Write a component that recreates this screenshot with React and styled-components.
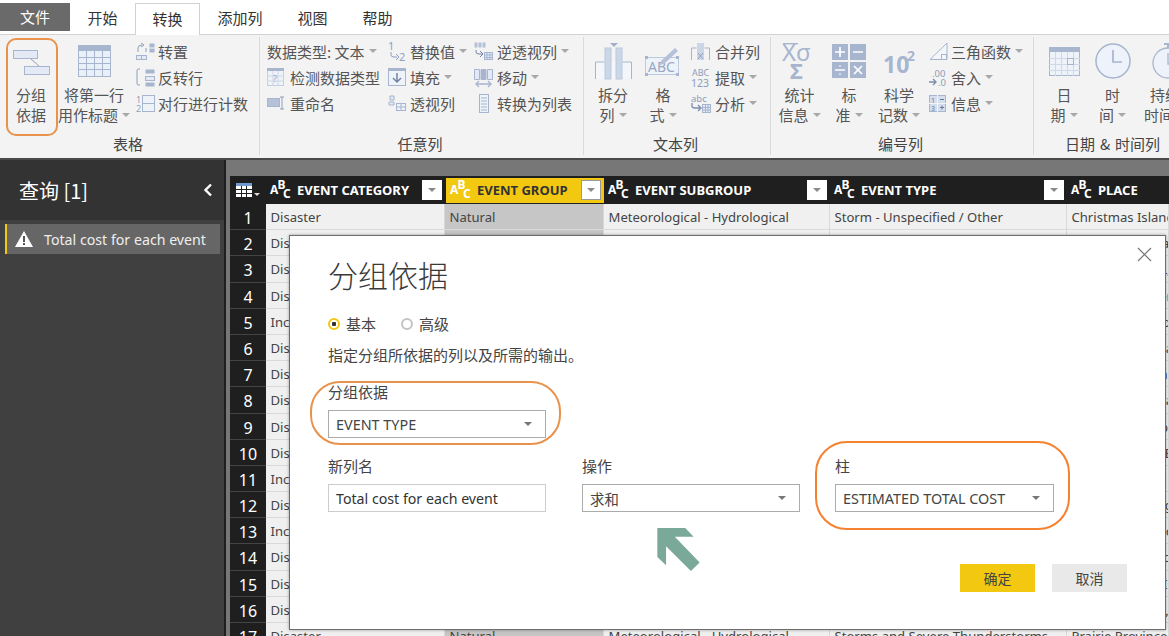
import React from 'react'
import styled, { createGlobalStyle } from 'styled-components'

const CJK = `"Noto Sans CJK SC", "Noto Sans", sans-serif`
const LATIN = `"Noto Sans", "Noto Sans CJK SC", sans-serif`
const LINE = '#a7b5cf'
const FILL = '#e3eaf5'

const Global = createGlobalStyle`
html, body { margin: 0; padding: 0; height: 636px; overflow: hidden; background: #777; }
#root { height: 636px; }
* { box-sizing: border-box; }
`

const Page = styled.div`
position: relative;
width: 1169px;
height: 636px;
overflow: hidden;
display: flex;
flex-direction: column;
font-family: ${CJK};
color: #444;
`

/* ---- tabs ---- */
const TabBar = styled.div`
display: flex;
height: 35px;
flex: none;
padding-top: 3px;
background: #fff;
border-bottom: 1px solid #d2d2d2;
`
const FileTab = styled.div`
width: 70px;
height: 28px;
background: #6a6a6a;
color: #fff;
font-size: 15px;
line-height: 28px;
text-align: center;
`
const Tab = styled.div`
padding: 0 17.5px;
height: ${p => (p.$active ? '32px' : '28px')};
font-size: 15px;
line-height: 29px;
color: #333;
background: #fff;
${p => p.$active && 'border: 1px solid #d2d2d2; border-bottom: 0; padding: 0 16.5px; height: 32px;'}
`

/* ---- ribbon ---- */
const Ribbon = styled.div`
display: flex;
height: 123px;
flex: none;
background: #f3f3f3;
overflow: hidden;
`
const Group = styled.div`
flex: none;
width: ${p => p.$w}px;
display: flex;
flex-direction: column;
border-right: ${p => (p.$last ? '0' : '1px solid #dadada')};
margin: 2px 0 3px;
`
const GroupBody = styled.div`
display: flex;
height: 97px;
padding-top: 1px;
padding-left: ${p => p.$pl || 0}px;
`
const GroupLabel = styled.div`
height: 20px;
font-size: 15px;
line-height: 20px;
text-align: center;
padding-right: 3px;
word-spacing: 1.5px;
color: #444;
`
const BigBtn = styled.div`
flex: none;
width: ${p => p.$w}px;
margin-right: ${p => p.$mr || 0}px;
height: ${p => (p.$boxed ? '98px' : '96px')};
display: flex;
flex-direction: column;
align-items: center;
font-size: 15px;
line-height: 20px;
color: #555;
${p => p.$boxed && 'border: 2px solid #e8924c; border-radius: 10px; padding-right: 2px;'}
`
const BigIcon = styled.div`
height: ${p => (p.$boxed ? '45px' : '47px')};
display: flex;
align-items: center;
justify-content: center;
padding-bottom: 1px;
`
const BtnLine = styled.div`
white-space: nowrap;
display: flex;
align-items: center;
`
const Caret = styled.span`
display: inline-block;
width: 0;
height: 0;
margin-left: 4px;
border-left: 4px solid transparent;
border-right: 4px solid transparent;
border-top: 4px solid #a8a8a8;
`
const SmallCol = styled.div`
flex: none;
width: ${p => p.$w}px;
margin-left: ${p => p.$ml || 0}px;
display: flex;
flex-direction: column;
`
const SmallBtn = styled.div`
height: 26px;
display: flex;
align-items: center;
font-size: 15px;
white-space: nowrap;
color: #555;
`
const IconSlot = styled.div`
flex: none;
width: ${p => p.$w}px;
`

/* ---- icons ---- */
const Svg = ({ w, h, children }) => (
  <svg width={w} height={h} viewBox={`0 0 ${w} ${h}`} fill="none" overflow="visible" style={{ flex: 'none', display: 'block' }}>
    {children}
  </svg>
)
const GroupByIcon = () => (
  <Svg w={37} h={25}>
    <rect x=".5" y=".5" width="24" height="8" fill={FILL} stroke={LINE} />
    <rect x="11.5" y="16.5" width="25" height="8" fill={FILL} stroke={LINE} />
    <path d="M18 9l8 7" stroke="#8f9fbd" />
  </Svg>
)
const HeaderTableIcon = () => (
  <Svg w={33} h={32}>
    <rect x=".5" y=".5" width="32" height="31" fill="#eaf0f8" stroke={LINE} />
    <rect x="0" y="0" width="33" height="6" fill={LINE} />
    <path d="M8.5 0v32M16.5 0v32M24.5 0v32M0 12.5h33M0 18.5h33M0 24.5h33" stroke={LINE} />
  </Svg>
)
const TransposeIcon = () => (
  <Svg w={19} h={17}>
    <rect x="13.5" y=".5" width="5" height="9" fill={LINE} />
    <path d="M13.5 5h5" stroke="#fff" />
    <rect x=".5" y="12.5" width="10" height="4" fill={FILL} stroke={LINE} />
    <path d="M5.5 12.5v4" stroke={LINE} />
    <path d="M2 9V5q0-3 4-3M5 0l3 2-3 2M10 5v4" stroke="#8f9fbd" />
  </Svg>
)
const ReverseIcon = () => (
  <Svg w={19} h={19}>
    <path d="M4 1H2Q1 1 1 3v12q0 2 1 2h2" stroke="#8f9fbd" />
    <rect x="9.5" y="1.5" width="9" height="4" fill={LINE} />
    <rect x="9.5" y="8.5" width="9" height="4" fill={FILL} stroke={LINE} />
    <rect x="9.5" y="14.5" width="9" height="4" fill={LINE} />
  </Svg>
)
const NumberRowsIcon = () => (
  <Svg w={19} h={17}>
    <text x="0" y="8" fontSize="9" fontFamily="Noto Sans" fill="#8f9fbd">1</text>
    <text x="0" y="17" fontSize="9" fontFamily="Noto Sans" fill="#8f9fbd">2</text>
    <rect x="6.5" y=".5" width="12" height="16" fill="#eef2f9" stroke={LINE} />
    <path d="M6 8.5h13" stroke={LINE} />
  </Svg>
)
const DetectIcon = () => (
  <Svg w={17} h={18}>
    <rect x=".5" y=".5" width="16" height="17" fill="#eef2f9" stroke="#c4cfe0" />
    <rect width="17" height="3" fill={LINE} />
    <path d="M6 3v15M11 3v15M0 8h17M0 13h17" stroke="#cdd7e6" />
    <text x="6" y="14" fontSize="9" fontFamily="Noto Sans" fill="#98a8c4">?</text>
  </Svg>
)
const RenameIcon = () => (
  <Svg w={18} h={14}>
    <rect x=".5" y="2.5" width="12" height="8" fill="#b4c1d8" stroke={LINE} />
    <path d="M13 1h4M15 1v12M13 13h4" stroke="#8f9fbd" />
  </Svg>
)
const ReplaceIcon = () => (
  <Svg w={18} h={20}>
    <text x="0" y="9" fontSize="11" fontFamily="Noto Sans" fill="#8f9fbd">1</text>
    <text x="11" y="20" fontSize="11" fontFamily="Noto Sans" fill="#8f9fbd">2</text>
    <path d="M3 11v3q0 2 3 2h3M8 13l3 3-3 3" stroke="#8f9fbd" />
  </Svg>
)
const FillIcon = () => (
  <Svg w={18} h={18}>
    <rect x=".5" y=".5" width="17" height="17" fill="#eef2f9" stroke={LINE} />
    <rect width="18" height="3" fill={LINE} />
    <path d="M9 5v9M5 10l4 4 4-4" stroke="#7283a3" strokeWidth="1.5" />
  </Svg>
)
const PivotIcon = () => (
  <Svg w={18} h={16}>
    <path d="M2 1h4v4H2zM1 7h5v3H1z" fill={FILL} stroke={LINE} />
    <rect x="8.5" y="8.5" width="9" height="7" fill="#eef2f9" stroke={LINE} />
    <path d="M8 12h10M13 8v8" stroke={LINE} />
  </Svg>
)
const UnpivotIcon = () => (
  <Svg w={19} h={18}>
    <rect x=".5" y=".5" width="11" height="5" fill="#b4c1d8" />
    <path d="M4 0v6M8 0v6" stroke="#f3f3f3" />
    <path d="M2 8v2q0 2 3 2h3M6 9l3 3-3 3" stroke="#7283a3" />
    <rect x="10.5" y="10.5" width="8" height="7" fill={FILL} stroke={LINE} />
    <path d="M10 13h9M10 15.5h9M13 10v8M16 10v8" stroke={LINE} />
  </Svg>
)
const MoveIcon = () => (
  <Svg w={19} h={19}>
    <path d="M.5 1.5h5v10h-5zM7 1.5h5v10H7zM13.5 1.5h5v10h-5z" fill={FILL} stroke={LINE} />
    <path d="M7 1.5h5v10H7z" fill={LINE} />
    <path d="M2 16h15M5 13l-3 3 3 3M14 13l3 3-3 3" stroke={LINE} strokeWidth="1.4" />
  </Svg>
)
const ToListIcon = () => (
  <Svg w={19} h={19}>
    <rect x="5.5" y=".5" width="9" height="18" fill="#eef2f9" stroke={LINE} />
    <path d="M7 4h6M7 7h6M7 10h6M7 13h6M7 16h6" stroke={LINE} />
  </Svg>
)
const SplitIcon = () => (
  <Svg w={37} h={37}>
    <rect x="1" y="19" width="35" height="17" fill="#f3f6fb" />
    <path d="M.5 36V19h9M36.5 36V19h-9" stroke={LINE} />
    <rect x="10" y="5" width="6" height="31" fill="#cbd6e6" stroke="#bccadf" />
    <rect x="21" y="5" width="6" height="31" fill="#cbd6e6" stroke="#bccadf" />
    <path d="M15 0h8l-4 4z" fill="#a3b0c8" />
  </Svg>
)
const FormatIcon = () => (
  <Svg w={36} h={32}>
    <rect x=".5" y="12.5" width="33" height="17" fill="#eef2f9" stroke="#bdcade" />
    <path d="M0 11h3v3H0zM31 11h3v3h-3zM0 28h3v3H0zM31 28h3v3h-3z" fill={LINE} />
    <text x="3" y="27" fontSize="14" fontFamily="Noto Sans" fill="#98a8c4">ABC</text>
    <path d="M16 16l14-13 3 3-14 13-4 1z" fill="#b4c1d8" />
  </Svg>
)
const MergeIcon = () => (
  <Svg w={19} h={17}>
    <path d="M.5 17V5h5M18.5 17V5h-5" stroke={LINE} />
    <rect x="6" y="0" width="7" height="17" fill="#cbd6e6" />
    <path d="M7 10l2.5 3 2.5-3M7 16l2.5-3 2.5 3" stroke="#8f9fbd" />
  </Svg>
)
const ExtractIcon = () => (
  <Svg w={20} h={20}>
    <text x="1" y="9" fontSize="9" fontFamily="Noto Sans" fill="#8c9cba">ABC</text>
    <text x="0" y="20" fontSize="10.5" fontFamily="Noto Sans" fill="#8c9cba">123</text>
  </Svg>
)
const ParseIcon = () => (
  <Svg w={20} h={19}>
    <text x="0" y="8" fontSize="9.5" fontFamily="Noto Sans" fill="#8c9cba">abc</text>
    <path d="M1 9v3q0 2 3 2h5M7 11l3 3-3 3" stroke="#7c8dad" strokeWidth="1.3" />
    <rect x="11.5" y="10.5" width="8" height="8" fill={FILL} stroke={LINE} />
    <path d="M11 13.5h9M11 16h9M14.5 10v9M17 10v9" stroke={LINE} />
  </Svg>
)
const StatsIcon = () => (
  <Svg w={33} h={36}>
    <text x="-1" y="18" fontSize="24" fontFamily="Noto Sans" fill="#a7b5cf">Xσ</text>
    <path d="M0 .7h15" stroke={LINE} strokeWidth="1.4" />
    <text x="7" y="36" fontSize="22" fontWeight="700" fontFamily="Noto Sans" fill="#a7b5cf">Σ</text>
  </Svg>
)
const StandardIcon = () => (
  <Svg w={34} h={34}>
    <rect width="16" height="16" fill={LINE} />
    <rect x="18" width="16" height="16" fill={LINE} />
    <rect y="18" width="16" height="16" fill={LINE} />
    <rect x="18" y="18" width="16" height="16" fill={LINE} />
    <path d="M3 8h10M8 3v10M21 8h10M3 26h10M22 22l8 8M30 22l-8 8" stroke="#fff" strokeWidth="1.7" />
    <path d="M8 21.5v1M8 29.5v1" stroke="#fff" strokeWidth="2" />
  </Svg>
)
const ScientificIcon = () => (
  <Svg w={32} h={26}>
    <text x="0" y="25" fontSize="23" fontWeight="700" fontFamily="Noto Sans" fill="#a7b5cf">10</text>
    <text x="24" y="13" fontSize="14" fontWeight="700" fontFamily="Noto Sans" fill="#a7b5cf">2</text>
  </Svg>
)
const TrigIcon = () => (
  <Svg w={19} h={18}>
    <path d="M1 17.5L18 1v16.5z" fill="#f3f6fb" stroke={LINE} />
    <rect x="12.5" y="12.5" width="5" height="5" stroke={LINE} />
  </Svg>
)
const RoundIcon = () => (
  <Svg w={19} h={17}>
    <text x="3" y="8" fontSize="9.5" fontFamily="Noto Sans" fill="#8c9cba">.00</text>
    <text x="9" y="17" fontSize="9.5" fontFamily="Noto Sans" fill="#8c9cba">.0</text>
    <path d="M0 13h6M4 10l3 3-3 3" stroke="#7c8dad" strokeWidth="1.4" />
  </Svg>
)
const InfoIcon = () => (
  <Svg w={17} h={17}>
    <rect x=".5" y=".5" width="16" height="16" fill="#d4deec" stroke={LINE} />
    <path d="M8.5 0v17M0 8.5h17" stroke="#f3f3f3" />
    <text x="2" y="7.5" fontSize="7" fontFamily="Noto Sans" fill="#66799c">1</text>
    <text x="2" y="15.5" fontSize="7" fontFamily="Noto Sans" fill="#66799c">3</text>
    <path d="M11 4.5h4M11 12.5h4M13 10.5v4" stroke="#66799c" />
  </Svg>
)
const CalendarIcon = () => (
  <Svg w={31} h={29}>
    <rect x=".5" y=".5" width="30" height="28" fill="#eef2f9" stroke={LINE} />
    <rect width="31" height="5" fill={LINE} />
    <path d="M6.5 5v24M12.5 5v24M18.5 5v24M24.5 5v24M0 11.5h31M0 17.5h31M0 23.5h31" stroke="#cfd9e8" />
    <rect x="18.5" y="11.5" width="6" height="6" stroke={LINE} />
  </Svg>
)
const ClockIcon = () => (
  <Svg w={36} h={36}>
    <circle cx="18" cy="18" r="17" fill="#edf2fb" stroke={LINE} strokeWidth="1.5" />
    <path d="M18 7v12h9" stroke={LINE} strokeWidth="1.7" />
  </Svg>
)
const TimerIcon = () => (
  <Svg w={30} h={36}>
    <path d="M14 1h8M18 1v5" stroke={LINE} strokeWidth="2" />
    <circle cx="18" cy="20" r="15" fill="#edf2fb" stroke={LINE} strokeWidth="1.3" />
    <path d="M18 10v11h9" stroke={LINE} strokeWidth="1.3" />
  </Svg>
)

/* ---- workspace ---- */
const Work = styled.div`
flex: 1;
display: flex;
min-height: 0;
border-top: 2px solid #4a4a4a;
`
const Side = styled.div`
flex: none;
width: 226px;
background: #404040;
border-right: 2px solid #1f1f1f;
`
const SideHead = styled.div`
height: 60px;
background: #333;
display: flex;
align-items: center;
justify-content: space-between;
padding: 0 11px 0 19px;
color: #fff;
font-size: 20px;
`
const QueryItem = styled.div`
margin: 4px 4px 0 5px;
height: 30px;
background: #666;
border-left: 2px solid #f2c811;
display: flex;
align-items: center;
gap: 11px;
padding-left: 8px;
color: #eee;
font-family: ${LATIN};
font-size: 14.2px;
`
const Grey = styled.div`
flex: 1;
min-width: 0;
background: #777;
padding: 16px 0 0 4px;
`
const Table = styled.div`
display: grid;
grid-template-columns: 36px 179px 159px 226px 237px 102px;
grid-template-rows: 28px;
grid-auto-rows: 26.2px;
font-family: ${LATIN};
font-size: 13.1px;
`
const HeadCorner = styled.div`
background: #1f1f1f;
display: flex;
align-items: center;
justify-content: center;
`
const Head = styled.div`
background: #1f1f1f;
border-top: 2px solid #1f1f1f;
border-bottom: 1px solid #1f1f1f;
display: flex;
align-items: center;
padding: 0 3px 2px 4px;
gap: 7px;
font-weight: 700;
font-size: 13px;
white-space: nowrap;
overflow: hidden;
color: ${p => (p.$sel ? '#333' : '#fff')};
${p => p.$sel && 'background-clip: padding-box; background-color: #f2c811; border-left: 1px solid #1f1f1f;'}
`
const HeadName = styled.span`
flex: 1;
`
const FilterBtn = styled.div`
flex: none;
width: 20px;
height: 20px;
background: #fff;
border: 1px solid ${p => (p.$sel ? '#999' : '#fff')};
display: flex;
align-items: center;
justify-content: center;
&::after {
  content: '';
  border-left: 4px solid transparent;
  border-right: 4px solid transparent;
  border-top: 4px solid #8a8a8a;
}
`
const RowNum = styled.div`
background: #1f1f1f;
color: #fff;
border-bottom: 1px solid #444;
font-size: 16px;
line-height: 29px;
text-align: center;
overflow: hidden;
`
const Cell = styled.div`
background: ${p => (p.$sel ? '#c6c6c6' : '#f0f0f0')};
border-bottom: 1px solid #d9d9d9;
border-right: 1px solid #d9d9d9;
padding-left: 4.5px;
line-height: 26px;
white-space: nowrap;
overflow: hidden;
color: #444;
`

/* ---- dialog ---- */
const Dialog = styled.div`
position: absolute;
left: 289px;
top: 235px;
width: 877px;
height: 395px;
background: #fff;
border: 1px solid #6e6e6e;
box-shadow: 0 0 3px rgba(0, 0, 0, 0.35);
padding: 15px 0 0 38px;
display: flex;
flex-direction: column;
color: #444;
font-size: 15px;
`
const CloseBtn = styled.div`
position: absolute;
right: 13px;
top: 9px;
width: 15px;
height: 15px;
`
const Title = styled.div`
font-size: 30px;
line-height: 46px;
font-weight: 300;
color: #3a3a3a;
`
const Radios = styled.div`
display: flex;
align-items: center;
margin-top: 17px;
height: 20px;
line-height: 20px;
`
const Radio = styled.span`
display: inline-block;
width: 12px;
height: 12px;
border-radius: 50%;
margin-right: 6px;
border: ${p => (p.$on ? '2.5px solid #f2c811' : '2px solid #c4c4c4')};
background: ${p => (p.$on ? 'radial-gradient(circle, #333 0 2px, #fff 2.5px)' : '#fff')};
`
const RadioLabel = styled.span`
margin-right: ${p => p.$mr || 0}px;
`
const Desc = styled.div`
margin-top: 10px;
height: 22px;
line-height: 22px;
`
const FieldRow = styled.div`
display: flex;
margin-top: ${p => p.$mt}px;
`
const Field = styled.div`
position: relative;
width: ${p => p.$w || 218}px;
margin-right: ${p => p.$mr || 0}px;
`
const FieldLabel = styled.div`
height: 20px;
line-height: 20px;
margin-bottom: 8px;
`
const Select = styled.div`
height: 28px;
border: 1px solid #ababab;
display: flex;
align-items: center;
justify-content: space-between;
padding: 0 13px 0 7px;
font-family: ${LATIN};
font-size: 14.4px;
color: #444;
background: #fff;
&::after {
  content: '';
  border-left: 4px solid transparent;
  border-right: 4px solid transparent;
  border-top: 4px solid #777;
}
`
const TextInput = styled.div`
height: 28px;
border: 1px solid #ccc;
display: flex;
align-items: center;
padding: 0 7px;
font-family: ${LATIN};
font-size: 14.2px;
color: #333;
`
const Ring = styled.div`
position: absolute;
pointer-events: none;
left: ${p => p.$l}px;
right: ${p => p.$r}px;
top: ${p => p.$t}px;
bottom: ${p => p.$b}px;
border: 2px solid ${p => p.$c};
border-radius: ${p => p.$rad}px;
`
const GreenArrow = styled.svg`
position: absolute;
left: 367px;
top: 292px;
`
const Actions = styled.div`
position: absolute;
right: 38px;
bottom: 37px;
display: flex;
gap: 17px;
`
const ActionBtn = styled.div`
width: 75px;
height: 28px;
background: ${p => (p.$primary ? '#f2c811' : '#e9e9e9')};
font-size: 14px;
line-height: 28px;
text-align: center;
color: #444;
`

const AbcIcon = () => (
  <svg width="20" height="20" viewBox="0 0 20 20" overflow="visible" style={{ flex: 'none' }}>
    <g fontFamily="Noto Sans" fontSize="12" fill="#fff">
      <text x="0" y="14">A</text>
      <text x="7.5" y="9">B</text>
      <text x="13" y="18">C</text>
    </g>
  </svg>
)

const columns = [
  { name: 'EVENT CATEGORY' },
  { name: 'EVENT GROUP', sel: true },
  { name: 'EVENT SUBGROUP' },
  { name: 'EVENT TYPE' },
  { name: 'PLACE', noFilter: true },
]

const cats = ['Disaster', 'Disaster', 'Disaster', 'Disaster', 'Incident', 'Disaster', 'Disaster', 'Disaster', 'Disaster', 'Disaster', 'Incident', 'Disaster', 'Incident', 'Disaster', 'Disaster', 'Disaster', 'Disaster']
const places = ['Christmas Island', 'Saskatchewan and', 'Nova Scotia, NL, NB', 'Kitchener, Waterlook', 'Ottawa, Ontario, Que', 'Newfoundland and', 'Manitoba, Ontario, r', 'Newfoundland and', 'Montreal, Quebec, c', 'Vancouver, BC, Banff', '', 'Lethbridge, Calgary, AB', 'Toronto, Ontario, Que', 'Halifax, Nova Scotia, N', 'Prince Edward Is, s', 'Yukon Territory, Yuk', 'Prairie Provinces']

const rows = cats.map((c, i) => [
  c,
  'Natural',
  'Meteorological - Hydrological',
  i === 16 ? 'Storms and Severe Thunderstorms' : 'Storm - Unspecified / Other',
  places[i],
])

const ribbon = [
  {
    label: '表格', w: 260, pl: 6,
    items: [
      { big: 1, boxed: 1, w: 52, mr: 1, icon: <GroupByIcon />, lines: ['分组', '依据'] },
      { big: 1, w: 70, icon: <HeaderTableIcon />, lines: ['将第一行', '用作标题'], caret: 1 },
      { col: 1, ml: 7, w: 115, slot: 22, list: [
        { icon: <TransposeIcon />, text: '转置' },
        { icon: <ReverseIcon />, text: '反转行' },
        { icon: <NumberRowsIcon />, text: '对行进行计数' },
      ] },
    ],
  },
  {
    label: '任意列', w: 324, pl: 7,
    items: [
      { col: 1, w: 121, slot: 23, list: [
        { text: '数据类型: 文本', caret: 1 },
        { icon: <DetectIcon />, text: '检测数据类型' },
        { icon: <RenameIcon />, text: '重命名' },
      ] },
      { col: 1, w: 86, slot: 22, list: [
        { icon: <ReplaceIcon />, text: '替换值', caret: 1 },
        { icon: <FillIcon />, text: '填充', caret: 1 },
        { icon: <PivotIcon />, text: '透视列' },
      ] },
      { col: 1, w: 105, slot: 23, list: [
        { icon: <UnpivotIcon />, text: '逆透视列', caret: 1 },
        { icon: <MoveIcon />, text: '移动', caret: 1 },
        { icon: <ToListIcon />, text: '转换为列表' },
      ] },
    ],
  },
  {
    label: '文本列', w: 187, pl: 4,
    items: [
      { big: 1, w: 50, icon: <SplitIcon />, lines: ['拆分', '列'], caret: 1 },
      { big: 1, w: 50, icon: <FormatIcon />, lines: ['格', '式'], caret: 1 },
      { col: 1, ml: 3, w: 75, slot: 24, list: [
        { icon: <MergeIcon />, text: '合并列' },
        { icon: <ExtractIcon />, text: '提取', caret: 1 },
        { icon: <ParseIcon />, text: '分析', caret: 1 },
      ] },
    ],
  },
  {
    label: '编号列', w: 263, pl: 4,
    items: [
      { big: 1, w: 49, icon: <StatsIcon />, lines: ['统计', '信息'], caret: 1 },
      { big: 1, w: 50, icon: <StandardIcon />, lines: ['标', '准'], caret: 1 },
      { big: 1, w: 50, icon: <ScientificIcon />, lines: ['科学', '记数'], caret: 1 },
      { col: 1, ml: 5, w: 100, slot: 22, list: [
        { icon: <TrigIcon />, text: '三角函数', caret: 1 },
        { icon: <RoundIcon />, text: '舍入', caret: 1 },
        { icon: <InfoIcon />, text: '信息', caret: 1 },
      ] },
    ],
  },
  {
    label: '日期 & 时间列', w: 160, pl: 6, last: 1,
    items: [
      { big: 1, w: 48, icon: <CalendarIcon />, lines: ['日', '期'], caret: 1 },
      { big: 1, w: 49, icon: <ClockIcon />, lines: ['时', '间'], caret: 1 },
      { big: 1, w: 56, icon: <TimerIcon />, lines: ['持续', '时间'], caret: 1 },
    ],
  },
]

const RibbonItem = ({ item }) => {
  if (item.col) {
    return (
      <SmallCol $w={item.w} $ml={item.ml}>
        {item.list.map(b => (
          <SmallBtn key={b.text}>
            {b.icon && <IconSlot $w={item.slot}>{b.icon}</IconSlot>}
            <span>{b.text}</span>
            {b.caret && <Caret />}
          </SmallBtn>
        ))}
      </SmallCol>
    )
  }
  return (
    <BigBtn $w={item.w} $mr={item.mr} $boxed={item.boxed}>
      <BigIcon $boxed={item.boxed}>{item.icon}</BigIcon>
      {item.lines.map((l, i) => (
        <BtnLine key={l}>
          {l}
          {item.caret && i === 1 && <Caret />}
        </BtnLine>
      ))}
    </BigBtn>
  )
}

const App = () => (
  <Page>
    <Global />
    <TabBar>
      <FileTab>文件</FileTab>
      <Tab>开始</Tab>
      <Tab $active>转换</Tab>
      <Tab>添加列</Tab>
      <Tab>视图</Tab>
      <Tab>帮助</Tab>
    </TabBar>

    <Ribbon>
      {ribbon.map(g => (
        <Group key={g.label} $w={g.w} $last={g.last}>
          <GroupBody $pl={g.pl}>
            {g.items.map((it, i) => <RibbonItem key={i} item={it} />)}
          </GroupBody>
          <GroupLabel>{g.label}</GroupLabel>
        </Group>
      ))}
    </Ribbon>

    <Work>
      <Side>
        <SideHead>
          <span>查询 [1]</span>
          <svg width="10" height="14" viewBox="0 0 10 14">
            <path d="M8 1.5L2.5 7 8 12.5" fill="none" stroke="#fff" strokeWidth="2.4" />
          </svg>
        </SideHead>
        <QueryItem>
          <svg width="18" height="16" viewBox="0 0 18 16" style={{ flex: 'none' }}>
            <path d="M9 0l9 16H0z" fill="#fff" />
            <path d="M8 5h2v6H8zM8 12h2v2H8z" fill="#555" />
          </svg>
          Total cost for each event
        </QueryItem>
      </Side>
      <Grey>
        <Table>
          <HeadCorner>
            <svg width="24" height="15" viewBox="0 0 24 15">
              <rect width="16" height="14" fill="#fff" />
              <rect width="16" height="3" fill="#6f9ad0" />
              <path d="M5.5 3v11M10.5 3v11M0 6.5h16M0 10.5h16" stroke="#1f1f1f" />
              <path d="M18 10h6l-3 3z" fill="#ddd" />
            </svg>
          </HeadCorner>
          {columns.map(c => (
            <Head key={c.name} $sel={c.sel}>
              <AbcIcon />
              <HeadName>{c.name}</HeadName>
              {!c.noFilter && <FilterBtn $sel={c.sel} />}
            </Head>
          ))}
          {rows.map((r, i) => (
            <React.Fragment key={i}>
              <RowNum>{i + 1}</RowNum>
              {r.map((v, j) => <Cell key={j} $sel={j === 1}>{v}</Cell>)}
            </React.Fragment>
          ))}
        </Table>
      </Grey>
    </Work>

    <Dialog>
      <CloseBtn>
        <svg width="15" height="15" viewBox="0 0 15 15">
          <path d="M1 1l13 13M14 1L1 14" stroke="#777" strokeWidth="1.2" />
        </svg>
      </CloseBtn>
      <Title>分组依据</Title>
      <Radios>
        <Radio $on />
        <RadioLabel $mr={25}>基本</RadioLabel>
        <Radio />
        <RadioLabel>高级</RadioLabel>
      </Radios>
      <Desc>指定分组所依据的列以及所需的输出。</Desc>
      <FieldRow $mt={16}>
        <Field>
          <Ring $c="#e8924c" $l={-18} $r={-15} $t={-1} $b={-7} $rad={30} />
          <FieldLabel>分组依据</FieldLabel>
          <Select>EVENT TYPE</Select>
        </Field>
      </FieldRow>
      <FieldRow $mt={18}>
        <Field $mr={36}>
          <FieldLabel>新列名</FieldLabel>
          <TextInput>Total cost for each event</TextInput>
        </Field>
        <Field $mr={35}>
          <FieldLabel>操作</FieldLabel>
          <Select>求和</Select>
        </Field>
        <Field $w={219}>
          <Ring $c="#f58230" $l={-20} $r={-16} $t={-15} $b={-18} $rad={32} />
          <FieldLabel>柱</FieldLabel>
          <Select>ESTIMATED TOTAL COST</Select>
        </Field>
      </FieldRow>
      <GreenArrow width="43" height="43" viewBox="0 0 126 128">
        <path d="M0 0h83l25 26H52l74 77-26 25-74-74v57L0 86z" fill="#7aa899" />
      </GreenArrow>
      <Actions>
        <ActionBtn $primary>确定</ActionBtn>
        <ActionBtn>取消</ActionBtn>
      </Actions>
    </Dialog>
  </Page>
)

export default App
